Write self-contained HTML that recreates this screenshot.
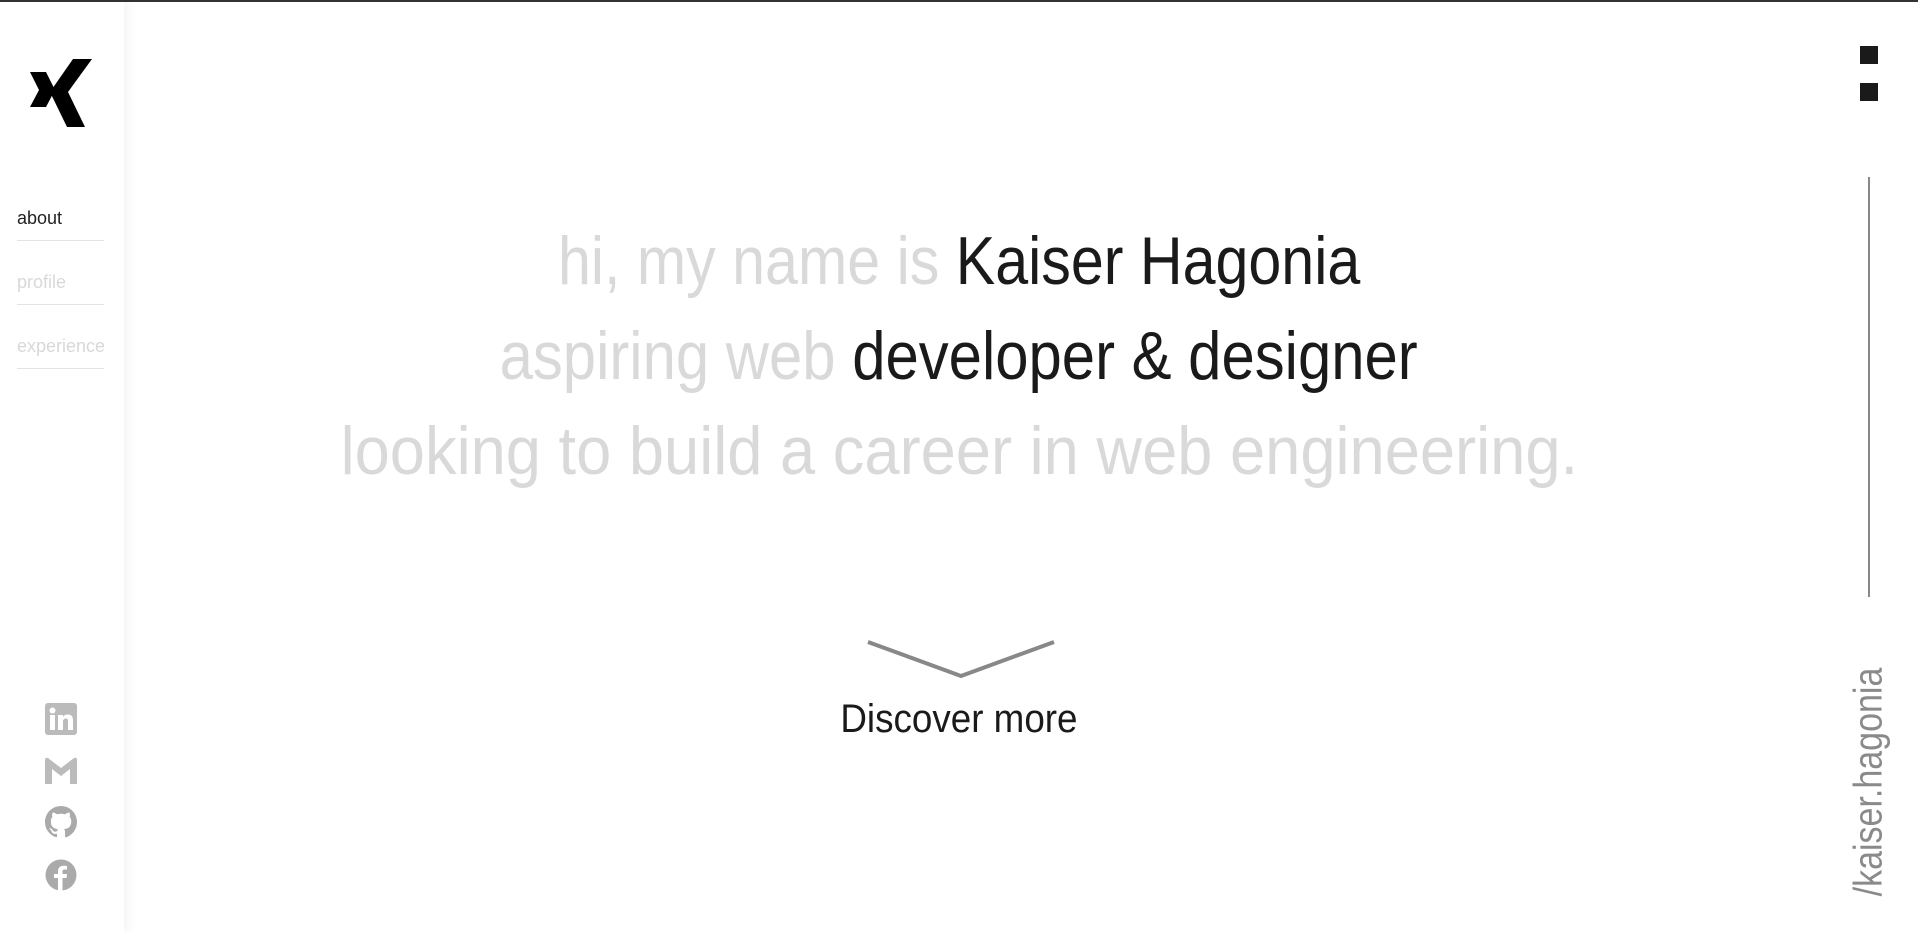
<!DOCTYPE html>
<html><head><meta charset="utf-8"><style>
html,body{margin:0;padding:0;width:1918px;height:932px;overflow:hidden;background:#fff;font-family:"Liberation Sans",sans-serif;}
.top{position:absolute;left:0;top:0;width:1918px;height:2px;background:#333;}
.side{position:absolute;left:0;top:2px;width:124px;height:930px;background:#fff;box-shadow:4px 0 12px rgba(0,0,0,0.05);}
.nav{position:absolute;left:17px;width:87px;border-bottom:1px solid #e3e3e3;font-size:18px;color:#d8d8d8;height:32px;}
.main{position:absolute;left:0;width:1918px;text-align:center;white-space:nowrap;}
.ln{position:absolute;left:0;width:1918px;text-align:center;font-size:68px;color:#d9d9d9;}
.ln span.d{color:#1a1a1a}
.ln div{display:inline-block;transform:scaleX(0.87);transform-origin:center;}
</style></head><body>
<div class="top"></div>
<div class="side">
<svg style="position:absolute;left:28px;top:55px" width="68" height="72" viewBox="0 0 68 72">
<polygon points="2,15 18,15 27,33 18,50 2,50 11,33" fill="#000"/>
<polygon points="45,2 64,2 40,35 57,70 39,70 22,35" fill="#000"/>
</svg>
<div class="nav" style="top:206px;color:#222;font-size:18px">about</div>
<div class="nav" style="top:270px">profile</div>
<div class="nav" style="top:334px">experience</div>
<svg style="position:absolute;left:45px;top:701px" width="32" height="32" viewBox="0 0 32 32"><rect width="32" height="32" rx="3" fill="#bbb"/><rect x="5" y="12" width="5" height="15" fill="#fff"/><circle cx="7.5" cy="7.5" r="3" fill="#fff"/><path d="M13 12h5v2c1-2 3-2.5 5-2.5 4 0 5 2.5 5 6V27h-5v-8.5c0-2-.5-3-2-3s-3 1-3 3V27h-5z" fill="#fff"/></svg>
<svg style="position:absolute;left:45px;top:755px" width="32" height="28" viewBox="0 0 32 28"><path d="M0 3 Q0 0 3 1 L16 11 L29 1 Q32 0 32 3 V27 H25 V12 L16 19 L7 12 V27 H0Z" fill="#bbb"/></svg>
<svg style="position:absolute;left:45px;top:804px" width="32" height="32" viewBox="0 0 16 16"><path fill="#aaa" d="M8 0C3.58 0 0 3.58 0 8c0 3.54 2.29 6.53 5.47 7.59.4.07.55-.17.55-.38v-1.34c-2.23.49-2.69-1.07-2.69-1.07-.36-.92-.89-1.17-.89-1.17-.73-.5.06-.49.06-.49.8.06 1.23.83 1.23.83.71 1.22 1.87.87 2.33.66.07-.52.28-.87.51-1.07-1.78-.2-3.64-.89-3.64-3.95 0-.87.31-1.59.82-2.15-.08-.2-.36-1.02.08-2.12 0 0 .67-.21 2.2.82.64-.18 1.32-.27 2-.27s1.36.09 2 .27c1.53-1.04 2.2-.82 2.2-.82.44 1.1.16 1.92.08 2.12.51.56.82 1.27.82 2.15 0 3.07-1.87 3.75-3.65 3.95.29.25.54.73.54 1.48v2.2c0 .21.15.46.55.38A8.01 8.01 0 0016 8c0-4.42-3.58-8-8-8z"/></svg>
<svg style="position:absolute;left:45px;top:857px" width="32" height="32" viewBox="0 0 32 32"><circle cx="16" cy="16" r="15.5" fill="#aaa"/><path d="M17.5 32V19h4l.5-4h-4.5v-2.5c0-1.2.4-2 2-2h2.5V7c-.5 0-2-.2-3.5-.2-3.4 0-5.5 2-5.5 5.6V15h-4v4h4v13z" fill="#fff"/></svg>
</div>
<div class="ln" style="top:222px"><div>hi, my name is <span class="d">Kaiser Hagonia</span></div></div>
<div class="ln" style="top:317px"><div style="transform:scaleX(0.88)">aspiring web <span class="d">developer &amp; designer</span></div></div>
<div class="ln" style="top:412px"><div style="transform:scaleX(0.93)">looking to build a career in web engineering.</div></div>
<svg style="position:absolute;left:864px;top:638px" width="194" height="42"><polyline points="4,4 97,38 190,4" fill="none" stroke="#888" stroke-width="4"/></svg>
<div class="main" style="top:697px;font-size:40px;color:#1a1a1a"><div style="display:inline-block;transform:scaleX(0.92)">Discover more</div></div>
<div style="position:absolute;left:1860px;top:46px;width:18px;height:18px;background:#1a1a1a"></div>
<div style="position:absolute;left:1860px;top:83px;width:18px;height:18px;background:#1a1a1a"></div>
<div style="position:absolute;left:1868px;top:177px;width:2px;height:420px;background:#888"></div>
<div style="position:absolute;left:1869px;top:782px;transform:translate(-50%,-50%) rotate(-90deg);font-size:40px;color:#8a8a8a;white-space:nowrap;"><div style="transform:scaleX(0.85)">/kaiser.hagonia</div></div>
</body></html>
